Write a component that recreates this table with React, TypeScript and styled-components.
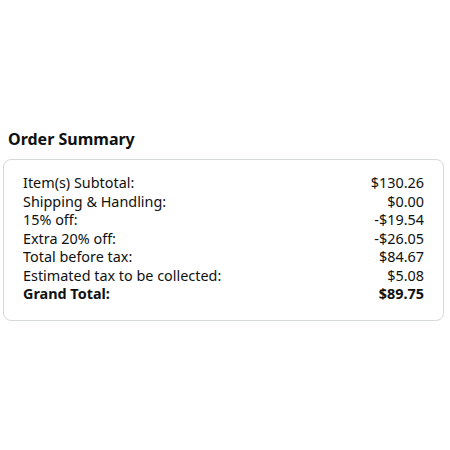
import * as React from 'react';
import styled, { createGlobalStyle } from 'styled-components';

const GlobalStyle = createGlobalStyle`
	html, body {
		margin: 0;
		padding: 0;
		background: #ffffff;
	}
	body {
		font-family: "Noto Sans", "Liberation Sans", sans-serif;
		color: #0f1111;
	}
`

const Page = styled.main`
	width: 450px;
	height: 450px;
	display: flex;
	flex-direction: column;
	justify-content: center;
	padding: 0 6px 0 3px;
	box-sizing: border-box;
`

const Title = styled.h2`
	margin: 0 0 10px 5px;
	font-size: 16px;
	line-height: 20px;
	font-weight: 700;
`

const Card = styled.section`
	border: 1px solid #d5d9d9;
	border-radius: 8px;
	padding: 14px 19px 16px 19px;
`

const Row = styled.div<{ $bold?: boolean }>`
	display: flex;
	justify-content: space-between;
	font-size: 14.4px;
	line-height: 18.5px;
	font-weight: ${({ $bold }) => ($bold ? 700 : 400)};
`

const lines = [
	{ label: 'Item(s) Subtotal:', value: '$130.26' },
	{ label: 'Shipping & Handling:', value: '$0.00' },
	{ label: '15% off:', value: '-$19.54' },
	{ label: 'Extra 20% off:', value: '-$26.05' },
	{ label: 'Total before tax:', value: '$84.67' },
	{ label: 'Estimated tax to be collected:', value: '$5.08' },
	{ label: 'Grand Total:', value: '$89.75', bold: true },
]

export default function App() {
	return (
		<Page>
			<GlobalStyle />
			<Title>Order Summary</Title>
			<Card>
				{lines.map((l) => (
					<Row key={l.label} $bold={l.bold}>
						<span>{l.label}</span>
						<span>{l.value}</span>
					</Row>
				))}
			</Card>
		</Page>
	)
}
